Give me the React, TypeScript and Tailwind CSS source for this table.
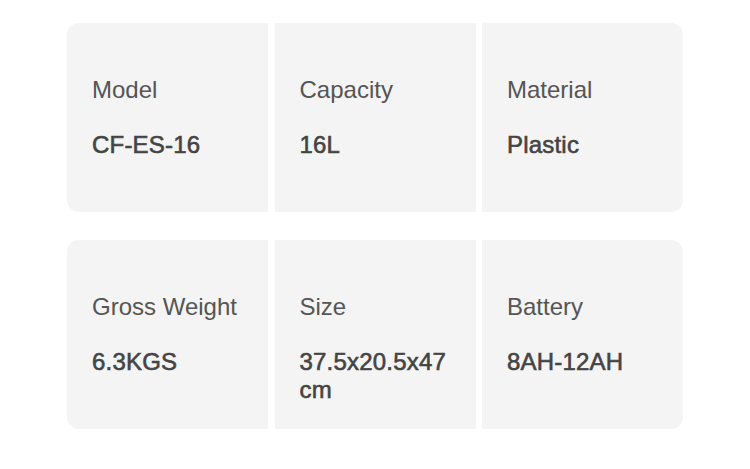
const rows = [
  [
    { label: "Model", value: "CF-ES-16" },
    { label: "Capacity", value: "16L" },
    { label: "Material", value: "Plastic" },
  ],
  [
    { label: "Gross Weight", value: "6.3KGS" },
    { label: "Size", value: "37.5x20.5x47 cm" },
    { label: "Battery", value: "8AH-12AH" },
  ],
]

export default function App() {
  return (
    <div
      className="w-[750px] h-[469px] bg-white pt-[23px] flex flex-col items-center gap-[28px]"
      style={{ fontFamily: '"Liberation Sans", Arial, sans-serif' }}
    >
      {rows.map((row, ri) => (
        <div key={ri} className="grid grid-cols-[201px_201px_201px] gap-x-[6.5px] w-[616px]">
          {row.map((cell, ci) => (
            <div
              key={cell.label}
              className={
                "h-[189px] bg-[#f4f4f4] pl-[25px] pr-[20px] pt-[53px] " +
                (ci === 0 ? "rounded-l-[12px]" : ci === 2 ? "rounded-r-[12px]" : "")
              }
            >
              <div className="text-[24px] leading-[28px] text-[#555555]">{cell.label}</div>
              <div className="mt-[27px] text-[24px] leading-[28px] tracking-[0.2px] text-[#444444] [-webkit-text-stroke:0.6px_#444444]">
                {cell.value}
              </div>
            </div>
          ))}
        </div>
      ))}
    </div>
  )
}
